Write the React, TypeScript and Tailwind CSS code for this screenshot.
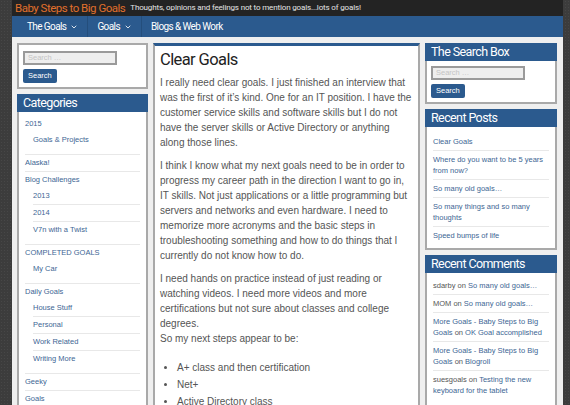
import { ChevronDown } from 'lucide-react'

const head = { fontFamily: 'Roboto, "Liberation Sans", sans-serif' }
const body = { fontFamily: '"Liberation Sans", Arial, sans-serif' }

type Cat = { label: string; subs?: string[] }

const categories: Cat[] = [
  { label: '2015', subs: ['Goals & Projects'] },
  { label: 'Alaska!' },
  { label: 'Blog Challenges', subs: ['2013', '2014', 'V7n with a Twist'] },
  { label: 'COMPLETED GOALS', subs: ['My Car'] },
  { label: 'Daily Goals', subs: ['House Stuff', 'Personal', 'Work Related', 'Writing More'] },
  { label: 'Geeky' },
  { label: 'Goals' },
]

const recentPosts = [
  'Clear Goals',
  'Where do you want to be 5 years from now?',
  'So many old goals…',
  'So many things and so many thoughts',
  'Speed bumps of life',
]

const comments: [string, string][] = [
  ['sdarby', 'So many old goals…'],
  ['MOM', 'So many old goals…'],
  ['More Goals - Baby Steps to Big Goals', 'OK Goal accomplished'],
  ['More Goals - Baby Steps to Big Goals', 'Blogroll'],
  ['suesgoals', 'Testing the new keyboard for the tablet'],
]

const SearchForm = () => (
  <div className="flex flex-col items-start gap-[4px]">
    <div className="w-[94px] h-[14px] bg-[#eeeeee] border-2 border-[#9a9a9a] text-[7.5px] text-[#c4c4c4] leading-[10px] px-[3px]">
      Search …
    </div>
    <button className="bg-[#2b5a8e] text-white text-[7.5px] px-[5px] h-[14px] rounded-[2px] leading-[14px]">Search</button>
  </div>
)

const WidgetHead = ({ title }: { title: string }) => (
  <div className="bg-[#2b5a8e] text-white text-[12.5px] tracking-[-0.6px] leading-[18px] px-[6px] h-[18px] -mx-[2px]" style={head}>
    {title}
  </div>
)

export default function App() {
  return (
    <div className="w-[570px] h-[405px] overflow-hidden bg-[#3c3c3c] bg-[radial-gradient(#474747_1px,transparent_1px)] bg-[length:3px_3px]" style={body}>
      <div className="ml-[12px] w-[551px] h-full bg-[#efefef]">
        <div className="h-[16px] bg-[#232323] flex items-center gap-[5px] px-[3px] whitespace-nowrap">
          <span className="text-[#e0702c] text-[11.5px] tracking-[-0.5px] leading-[16px]" style={head}>Baby Steps to Big Goals</span>
          <span className="text-[#e4e4e4] text-[8px] tracking-[-0.15px] leading-[16px]" style={head}>Thoughts, opinions and feelings not to mention goals...lots of goals!</span>
        </div>
        <div className="h-[21px] bg-[#2b5a8e] flex text-white text-[10px] tracking-[-0.6px]" style={head}>
          <div className="flex items-center gap-[4px] pl-[15px] pr-[9px] border-r border-[#244e7c]">The Goals <ChevronDown size={8} strokeWidth={2.5} /></div>
          <div className="flex items-center gap-[4px] pl-[9px] pr-[9px] border-r border-[#244e7c]">Goals <ChevronDown size={8} strokeWidth={2.5} /></div>
          <div className="flex items-center px-[9px]">Blogs &amp; Web Work</div>
        </div>

        <div className="flex gap-[5px] pl-[5px] pt-[6px]">
          {/* left sidebar */}
          <div className="w-[131px] flex flex-col gap-[5px]">
            <div className="bg-white border-2 border-[#a9a9a9] h-[46px] pl-[4px] pt-[6px]">
              <SearchForm />
            </div>
            <div className="bg-white border-2 border-t-0 border-[#a9a9a9] h-[320px]">
              <WidgetHead title="Categories" />
              <ul className="px-[6px] pt-[4px] text-[7.5px] text-[#3d6694]">
                {categories.map((c, i) => (
                  <li key={c.label} className={i ? 'border-t border-[#e8e8e8]' : ''}>
                    <div className="h-[16px] leading-[16px]">{c.label}</div>
                    {c.subs && (
                      <ul className="ml-[8px] mb-[6px]">
                        {c.subs.map((s, j) => (
                          <li key={s} className={`h-[16px] leading-[16px] box-content ${j ? 'border-t border-[#e8e8e8]' : ''}`}>{s}</li>
                        ))}
                      </ul>
                    )}
                  </li>
                ))}
              </ul>
            </div>
          </div>

          {/* main */}
          <div className="w-[267px] bg-white border-2 border-t-[3px] border-[#a9a9a9] border-t-[#2b5a8e] h-[400px] pl-[5px] pr-[4px] pt-[3px]">
            <h1 className="text-[16.5px] tracking-[-0.6px] leading-[22px] text-[#222] mb-[4px]" style={head}>Clear Goals</h1>
            <div className="text-[10px] leading-[15px] text-[#555] flex flex-col gap-[8px]">
              <p>I really need clear goals. I just finished an interview that was the first of it’s kind. One for an IT position. I have the customer service skills and software skills but I do not have the server skills or Active Directory or anything along those lines.</p>
              <p>I think I know what my next goals need to be in order to progress my career path in the direction I want to go in, IT skills. Not just applications or a little programming but servers and networks and even hardware. I need to memorize more acronyms and the basic steps in troubleshooting something and how to do things that I currently do not know how to do.</p>
              <p>
                I need hands on practice instead of just reading or watching videos. I need more videos and more certifications but not sure about classes and college degrees.
                <br />
                So my next steps appear to be:
              </p>
              <ul className="list-disc pl-[17px] leading-[17px] mt-[5px]">
                <li>A+ class and then certification</li>
                <li>Net+</li>
                <li>Active Directory class</li>
              </ul>
            </div>
          </div>

          {/* right sidebar */}
          <div className="w-[132px] flex flex-col gap-[5px]">
            <div className="bg-white border-2 border-t-0 border-[#a9a9a9] h-[61px]">
              <WidgetHead title="The Search Box" />
              <div className="pl-[4px] pt-[5px]">
                <SearchForm />
              </div>
            </div>
            <div className="bg-white border-2 border-t-0 border-[#a9a9a9] h-[141px]">
              <WidgetHead title="Recent Posts" />
              <ul className="px-[6px] pt-[6px] text-[7.5px] leading-[11px] text-[#3d6694]">
                {recentPosts.map((p, i) => (
                  <li key={p} className={`${i ? 'border-t border-[#e8e8e8]' : ''} py-[3px]`}>{p}</li>
                ))}
              </ul>
            </div>
            <div className="bg-white border-2 border-t-0 border-[#a9a9a9] h-[160px]">
              <WidgetHead title="Recent Comments" />
              <ul className="px-[6px] pt-[4px] text-[7.5px] leading-[11px] text-[#555]">
                {comments.map(([a, p], i) => (
                  <li key={i} className={`${i ? 'border-t border-[#e8e8e8]' : ''} py-[3px]`}>
                    <span className={a.startsWith('More') ? 'text-[#3d6694]' : ''}>{a}</span> on <span className="text-[#3d6694]">{p}</span>
                  </li>
                ))}
              </ul>
            </div>
          </div>
        </div>
      </div>
    </div>
  )
}
